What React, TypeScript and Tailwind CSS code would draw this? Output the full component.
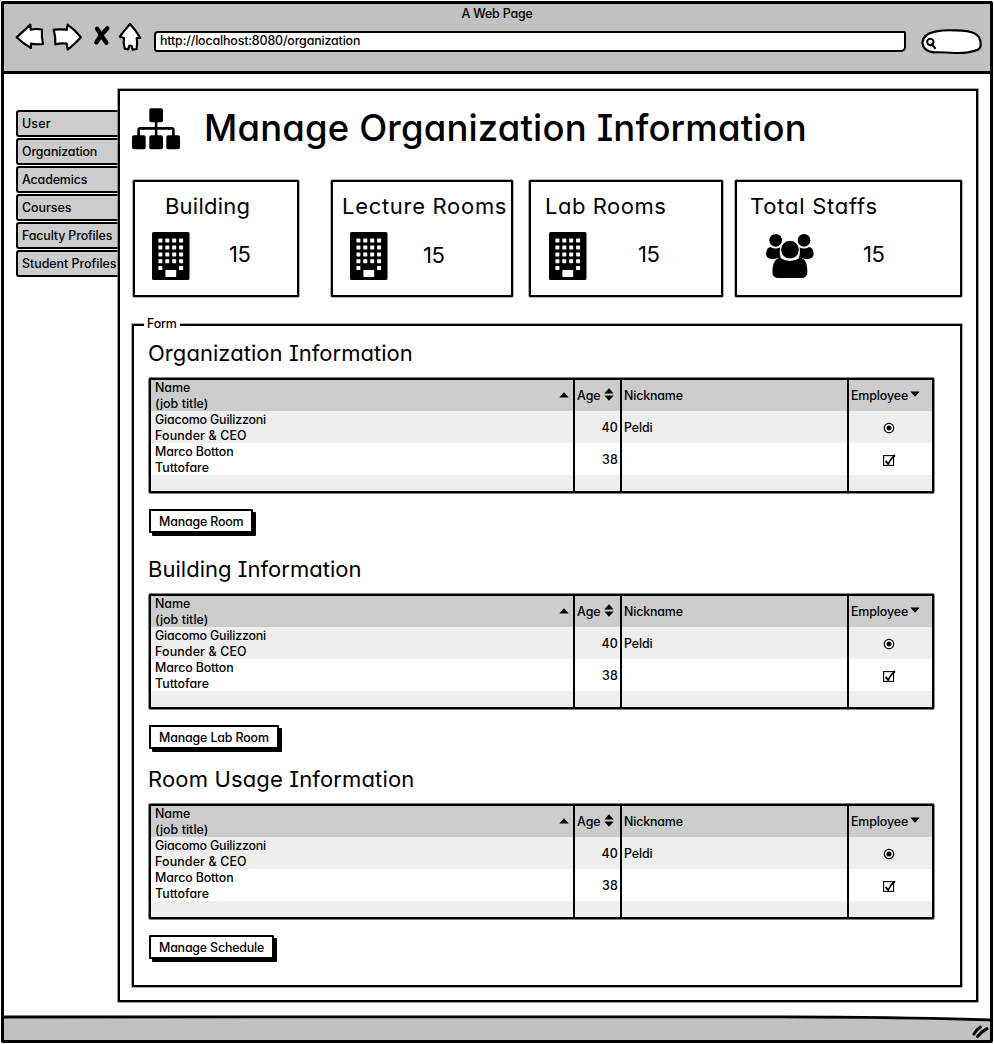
import type { ReactNode } from "react";

const tabs = [
  { label: "User", spacing: "tracking-[0.2px]" },
  { label: "Organization", spacing: "tracking-[-0.12px]" },
  { label: "Academics", spacing: "tracking-[-0.12px]" },
  { label: "Courses", spacing: "tracking-[0px]" },
  { label: "Faculty Profiles", spacing: "tracking-[-0.12px]" },
  { label: "Student Profiles", spacing: "tracking-[0px]" },
];

function BrowserButtons() {
  return (
    <svg
      className="h-[34px] w-[130px] shrink-0"
      viewBox="45 63 390 102"
      fill="#fff"
      stroke="#000"
      strokeWidth="6.5"
      strokeLinejoin="round"
      strokeLinecap="round"
    >
      <path d="M50 112 L91 74 L92 89 Q110 85 126 89 Q124 110 129 132 Q110 134 93 131 L93 144 Q70 132 50 112Z" />
      <path d="M161 89 Q180 87 200 89 L203 74 Q225 90 243 112 Q225 132 203 149 L200 131 Q184 129 166 133 Q167 110 161 89Z" />
      <g strokeWidth="13">
        <path d="M291 86 Q304 108 319 128" fill="none" />
        <path d="M322 85 Q302 104 289 127" fill="none" />
      </g>
      <path d="M390 72 Q376 88 359 110 L372 114 Q369 130 374 146 L385 148 L387 138 Q391 135 395 138 L398 149 L410 147 Q413 130 410 114 L421 114 Q407 90 390 72Z" />
    </svg>
  );
}

function SitemapIcon() {
  return (
    <svg className="h-[42px] w-[48px] shrink-0" viewBox="0 0 48 42">
      <rect x="17.3" y="0.2" width="13.7" height="14" rx="2" />
      <rect x="0" y="27.2" width="13.7" height="14" rx="2" />
      <rect x="17.3" y="27.2" width="13.7" height="14" rx="2" />
      <rect x="34.3" y="27.2" width="13.7" height="14" rx="2" />
      <path
        d="M6.6 28 V22 Q6.6 20.4 8.2 20.4 H39.8 Q41.4 20.4 41.4 22 V28 M24.1 13 V28"
        fill="none"
        stroke="#000"
        strokeWidth="2.6"
      />
    </svg>
  );
}

const windowRows = [6.6, 13.4, 20.4, 27.2, 34.1];
const windowCols = [6.4, 13.3, 20.2, 27.1];

function BuildingIcon() {
  return (
    <svg className="h-[48px] w-[38px] shrink-0" viewBox="0 0 38 48">
      <rect x="0" y="0" width="37.5" height="48" rx="1.6" />
      <g fill="#fff">
        {windowRows.map((y, r) =>
          windowCols.map((x, c) =>
            r === 4 && (c === 1 || c === 2) ? null : (
              <rect key={`${r}-${c}`} x={x} y={y} width="4" height="4" rx="0.6" />
            ),
          ),
        )}
        <rect x="13.4" y="38" width="10.8" height="6.9" rx="0.6" />
      </g>
    </svg>
  );
}

function UsersIcon() {
  return (
    <svg className="h-[44px] w-[48px] shrink-0" viewBox="199 192 144 132">
      <circle cx="228" cy="211" r="19" />
      <circle cx="313" cy="211" r="19" />
      <path d="M212 231 Q228 240 242 232 Q238 252 244 263 Q232 263 224 267 Q199 268 199 252 Q200 233 212 231Z" />
      <path d="M329 231 Q313 240 299 232 Q303 252 297 263 Q309 263 317 267 Q342 268 342 252 Q341 233 329 231Z" />
      <circle cx="271" cy="239" r="28" stroke="#fff" strokeWidth="3" />
      <path d="M241 263 Q256 273 271 273 Q286 273 301 263 Q323 264 323 306 Q323 324 304 324 H238 Q218 324 218 306 Q219 266 241 263Z" />
    </svg>
  );
}

function StatCard({
  className,
  title,
  titleClass,
  icon,
  valueClass,
}: {
  className: string;
  title: string;
  titleClass: string;
  icon: ReactNode;
  valueClass: string;
}) {
  return (
    <div className={`h-[117px] shrink-0 rounded-[1px] border-2 border-black shadow-[0_0_0_0.6px_#777] ${className}`}>
      <h2 className={`mt-[10px] whitespace-nowrap text-[22px] leading-[28px] ${titleClass}`}>{title}</h2>
      <div className="mt-[12px] flex h-[48px] items-center">
        {icon}
        <span className={`text-[22px] font-[430] leading-[28px] tracking-[-0.5px] ${valueClass}`}>15</span>
      </div>
    </div>
  );
}

function SortUp() {
  return (
    <svg className="h-[6px] w-[10px]" viewBox="0 0 10 6">
      <path d="M5 0.2 L9.7 5.6 H0.3Z" />
    </svg>
  );
}

function SortDown({ className = "" }: { className?: string }) {
  return (
    <svg className={`h-[6px] w-[10px] ${className}`} viewBox="0 0 10 6">
      <path d="M0.3 0.4 H9.7 L5 5.8Z" />
    </svg>
  );
}

const gridCols = "grid grid-cols-[424px_47px_227px_83px]";

function DataTable() {
  return (
    <div className="h-[115px] w-[785px] rounded-[1px] border-2 border-black shadow-[0_0_0_0.7px_#555]">
      <div className={`${gridCols} h-[31px] bg-[#cccccc]`}>
        <div className="flex items-center justify-between border-r-2 border-black pl-[4px] pr-[4px]">
          <div>
            <div className="tracking-[-0.05px]">Name</div>
            <div className="tracking-[0.05px]">(job title)</div>
          </div>
          <div className="mb-[2px] flex">
            <SortUp />
          </div>
        </div>
        <div className="flex items-center border-r-2 border-black pl-[2px]">
          <span>Age</span>
          <div className="mb-[4px] ml-[3px] flex flex-col gap-px">
            <SortUp />
            <SortDown />
          </div>
        </div>
        <div className="flex items-center border-r-2 border-black pl-[2px] tracking-[-0.15px]">Nickname</div>
        <div className="flex items-center pl-[2px] tracking-[-0.1px]">
          Employee
          <SortDown className="mb-[4px] ml-[2px]" />
        </div>
      </div>
      <div className={`${gridCols} h-[32px] bg-[#eeeeee]`}>
        <div className="border-r-2 border-black pl-[4px] pt-px">
          <div className="tracking-[-0.18px]">Giacomo Guilizzoni</div>
          <div className="tracking-[0.15px]">Founder &amp; CEO</div>
        </div>
        <div className="flex items-center justify-end border-r-2 border-black pr-[2px] pt-px tracking-[0.2px]">40</div>
        <div className="flex items-center border-r-2 border-black pl-[2px] pt-px tracking-[-0.1px]">Peldi</div>
        <div className="flex items-center justify-center pr-[3px]">
          <svg className="h-[12px] w-[12px]" viewBox="0 0 12 12">
            <circle cx="6" cy="6" r="4.7" fill="#fff" stroke="#000" strokeWidth="1.2" />
            <circle cx="6" cy="6" r="2.5" />
          </svg>
        </div>
      </div>
      <div className={`${gridCols} h-[32px] bg-white`}>
        <div className="border-r-2 border-black pl-[4px] pt-px">
          <div className="tracking-[-0.12px]">Marco Botton</div>
          <div className="tracking-[0px]">Tuttofare</div>
        </div>
        <div className="flex items-center justify-end border-r-2 border-black pr-[2px] pt-px tracking-[0.2px]">38</div>
        <div className="border-r-2 border-black" />
        <div className="flex items-center justify-center pr-[3px]">
          <svg className="h-[14px] w-[14px]" viewBox="0 0 14 14">
            <rect x="1.6" y="2.6" width="10" height="9.8" fill="#fff" stroke="#000" strokeWidth="1.1" />
            <path d="M3.6 7.8 L6.2 11 Q8.6 5.4 13 2.2" fill="none" stroke="#000" strokeWidth="1.9" />
          </svg>
        </div>
      </div>
      <div className={`${gridCols} h-[16px] bg-[#eeeeee]`}>
        <div className="border-r-2 border-black" />
        <div className="border-r-2 border-black" />
        <div className="border-r-2 border-black" />
        <div />
      </div>
    </div>
  );
}

function Section({
  className,
  title,
  titleClass,
  action,
  actionClass,
}: {
  className: string;
  title: string;
  titleClass: string;
  action: string;
  actionClass: string;
}) {
  return (
    <section className={`ml-[14px] ${className}`}>
      <h2 className={`h-[28px] whitespace-nowrap text-[22px] leading-[28px] ${titleClass}`}>{title}</h2>
      <div className="mt-[11px] ml-px">
        <DataTable />
        <button
          className={`mt-[16px] flex h-[24px] items-center whitespace-nowrap rounded-[1px] border-2 border-black bg-white pl-[8px] pt-[2px] shadow-[3px_3px_0_0_#000] ${actionClass}`}
        >
          {action}
        </button>
      </div>
    </section>
  );
}

export default function App() {
  return (
    <div className="h-[1044px] w-[994px] overflow-hidden bg-white pl-px pt-px font-['Inter',sans-serif] text-[12.4px] leading-[16px] font-[480] text-black [font-feature-settings:'cv11','cv08','calt'_0] [&_h1]:font-[450] [&_h2]:font-[430]">
      <div className="flex h-[1042px] w-[992px] flex-col rounded-[2px] border-[3px] border-black">
        <header className="h-[70px] shrink-0 border-b-[3px] border-black bg-[#c1c1c1]">
          <div className="pt-[2px] text-center tracking-[-0.15px]">A Web Page</div>
          <div className="mt-[-1px] flex h-[34px]">
            <div className="ml-[11px] flex">
              <BrowserButtons />
            </div>
            <div className="ml-[9px] mt-[10px] flex h-[21px] w-[752px] items-center rounded-[4px_2px_5px_3px] border-2 border-black bg-white pb-[2px] pl-[4px] tracking-[-0.14px]">
              http://localhost:8080/organization
            </div>
            <svg className="ml-[15px] mt-[7px] h-[26px] w-[62px]" viewBox="783 81 186 78">
              <path
                d="M880 88 Q925 87 945 98 Q963 107 962 132 Q962 145 945 149 Q915 158 885 156 Q850 153 820 154 Q789 150 787 125 Q789 99 825 92 Q850 87 880 88Z"
                fill="#fff"
                stroke="#000"
                strokeWidth="6.5"
              />
              <circle cx="811" cy="123" r="9.5" fill="none" stroke="#000" strokeWidth="6" />
              <path d="M816 130 L825 141" fill="none" stroke="#000" strokeWidth="6.5" strokeLinecap="round" />
            </svg>
          </div>
        </header>

        <div className="flex min-h-0 flex-1">
          <nav className="ml-[12px] mt-[36px] flex w-[102px] flex-col gap-px">
            {tabs.map((tab) => (
              <a
                key={tab.label}
                className={`flex h-[27px] items-center whitespace-nowrap rounded-l-[3px] border-2 border-r-0 border-black bg-[#cccccc] pl-[4px] ${tab.spacing}`}
              >
                {tab.label}
              </a>
            ))}
          </nav>

          <main className="mt-[15px] h-[913px] w-[860px] shrink-0 border-2 border-black shadow-[0_0_0_0.7px_#777]">
            <div className="flex items-start pl-[12px] pt-[17px]">
              <SitemapIcon />
              <h1 className="ml-[24px] mt-[-4px] whitespace-nowrap text-[36.5px] leading-[48px] tracking-[0.15px]">
                Manage Organization Information
              </h1>
            </div>

            <div className="mt-[28px] flex pl-[13px]">
              <StatCard
                className="w-[166px]"
                title="Building"
                titleClass="pl-[30px] tracking-[0.22px]"
                icon={<div className="ml-[17px]"><BuildingIcon /></div>}
                valueClass="ml-[39px] mt-[-4px]"
              />
              <StatCard
                className="ml-[32px] w-[182px]"
                title="Lecture Rooms"
                titleClass="pl-[9px] tracking-[0.7px]"
                icon={<div className="ml-[17px]"><BuildingIcon /></div>}
                valueClass="ml-[35px] mt-[-2px]"
              />
              <StatCard
                className="ml-[16px] w-[194px]"
                title="Lab Rooms"
                titleClass="pl-[14px] tracking-[0.53px]"
                icon={<div className="ml-[18px]"><BuildingIcon /></div>}
                valueClass="ml-[51px] mt-[-4px]"
              />
              <StatCard
                className="ml-[12px] w-[227px]"
                title="Total Staffs"
                titleClass="pl-[13px] tracking-[0.76px]"
                icon={<div className="ml-[29px]"><UsersIcon /></div>}
                valueClass="ml-[49px] mt-[-4px]"
              />
            </div>

            <div className="ml-[12px] mt-[27px] h-[663px] w-[830px] border-2 border-black shadow-[0_0_0_0.6px_#777]">
              <div className="-mt-[10px] ml-[10px] h-[16px] w-[36px] bg-white pl-[3px] tracking-[-0.15px]">Form</div>
              <Section
                className="mt-[7px]"
                title="Organization Information"
                titleClass="tracking-[0.05px]"
                action="Manage Room"
                actionClass="w-[104px] tracking-[-0.16px]"
              />
              <Section
                className="mt-[22px]"
                title="Building Information"
                titleClass="tracking-[0.03px]"
                action="Manage Lab Room"
                actionClass="w-[130px] tracking-[-0.13px]"
              />
              <Section
                className="mt-[16px]"
                title="Room Usage Information"
                titleClass="tracking-[0.15px]"
                action="Manage Schedule"
                actionClass="w-[125px] tracking-[-0.18px]"
              />
            </div>
          </main>
        </div>

        <footer className="h-[26px] shrink-0">
          <svg className="block h-[26px] w-full" viewBox="0 0 986 26" preserveAspectRatio="none">
            <path d="M0 3 Q500 1.5 780 2.8 Q900 3.2 986 5.8 V26 H0Z" fill="#c1c1c1" />
            <path d="M0 3 Q500 1.5 780 2.8 Q900 3.2 986 5.8" fill="none" stroke="#000" strokeWidth="2.8" />
            <path
              d="M976.5 13 Q972.5 15.4 970 20 M983 14.6 Q977.5 17.4 973.5 22.6"
              fill="none"
              stroke="#000"
              strokeWidth="3"
              strokeLinecap="round"
            />
          </svg>
        </footer>
      </div>
    </div>
  );
}
